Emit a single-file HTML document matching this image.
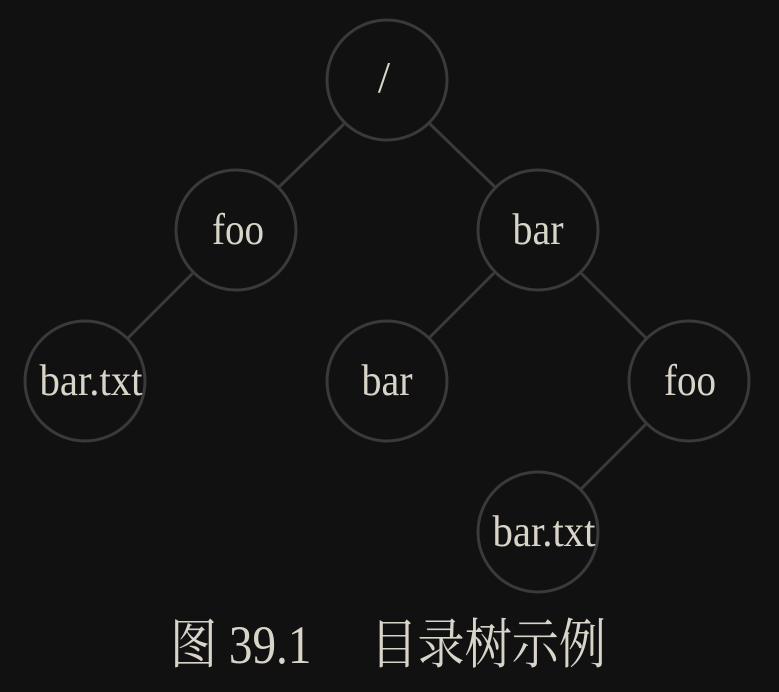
<!DOCTYPE html>
<html><head><meta charset="utf-8"><style>
html,body{margin:0;padding:0;background:#111112;}
svg{display:block}
text{font-family:"Liberation Serif","Noto Serif CJK SC",serif;fill:#d8d4c8;}
</style></head><body>
<svg width="779" height="692" viewBox="0 0 779 692">
<rect width="779" height="692" fill="#111112"/>
<g stroke="#3a3a3a" stroke-width="3" fill="none">
<line x1="344" y1="124" x2="279" y2="187"/>
<line x1="430" y1="124" x2="495" y2="187"/>
<line x1="193" y1="273" x2="128" y2="338"/>
<line x1="494" y1="273" x2="429" y2="338"/>
<line x1="581" y1="273" x2="646" y2="338"/>
<line x1="646" y1="424" x2="581" y2="489"/>
<circle cx="387" cy="80" r="60"/>
<circle cx="236" cy="230" r="60"/>
<circle cx="538" cy="230" r="60"/>
<circle cx="85" cy="381" r="60"/>
<circle cx="387" cy="381" r="60"/>
<circle cx="689" cy="381" r="60"/>
<circle cx="538" cy="532" r="60"/>
</g>
<g font-size="44" text-anchor="middle">
<text x="384" y="92">/</text>
<text x="238" y="244" textLength="52" lengthAdjust="spacingAndGlyphs">foo</text>
<text x="538" y="244" textLength="51" lengthAdjust="spacingAndGlyphs">bar</text>
<text x="91" y="395" textLength="103" lengthAdjust="spacingAndGlyphs">bar.txt</text>
<text x="387" y="395" textLength="51" lengthAdjust="spacingAndGlyphs">bar</text>
<text x="690" y="395" textLength="52" lengthAdjust="spacingAndGlyphs">foo</text>
<text x="544" y="546" textLength="103" lengthAdjust="spacingAndGlyphs">bar.txt</text>
</g>
<text x="170" y="663" font-size="54" textLength="436" lengthAdjust="spacingAndGlyphs">图 39.1　 目录树示例</text>
</svg>
</body></html>
